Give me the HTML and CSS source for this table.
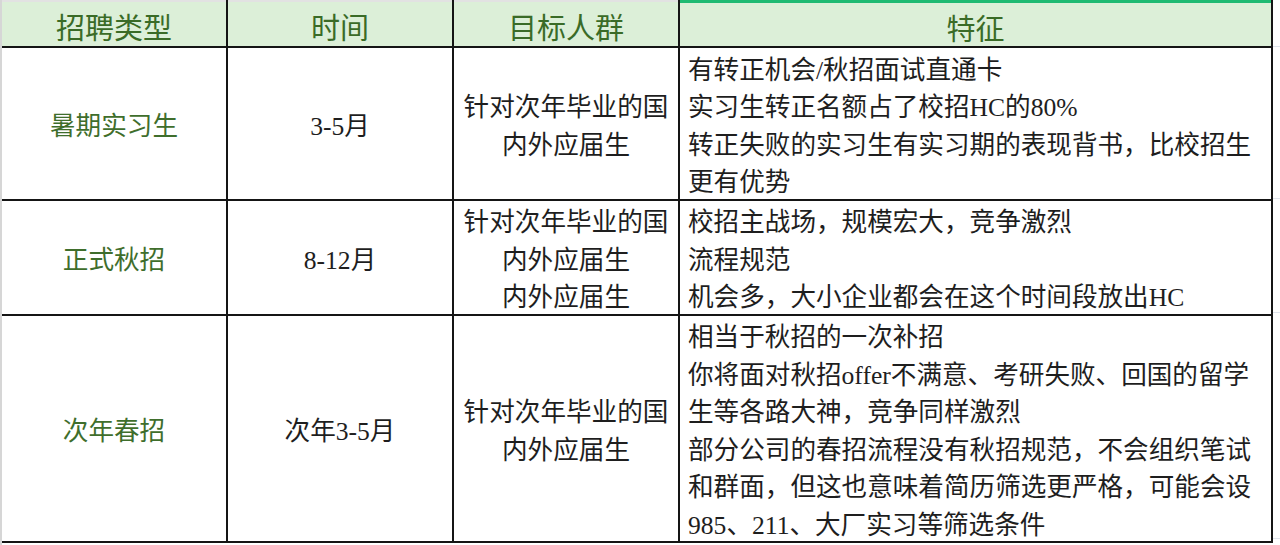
FILE: index.html
```html
<!DOCTYPE html>
<html lang="zh-CN">
<head>
<meta charset="utf-8">
<title>招聘类型</title>
<link rel="stylesheet" href="styles.css">
</head>
<body>
<div class="sheet">
  <div class="gutter"></div>
  <div class="table">
    <div class="hd">招聘类型</div>
    <div class="hd">时间</div>
    <div class="hd">目标人群</div>
    <div class="hd hd-active">特征</div>

    <div class="cell label">暑期实习生</div>
    <div class="cell mid"><span>3-5月</span></div>
    <div class="cell mid"><span>针对次年毕业的国内外应届生</span></div>
    <div class="cell feat">
      <p>有转正机会/秋招面试直通卡</p>
      <p>实习生转正名额占了校招HC的80%</p>
      <p>转正失败的实习生有实习期的表现背书，比校招生更有优势</p>
    </div>

    <div class="cell label">正式秋招</div>
    <div class="cell mid"><span>8-12月</span></div>
    <div class="cell mid"><span class="lines"><span>针对次年毕业的国</span><span>内外应届生</span><span>内外应届生</span></span></div>
    <div class="cell feat">
      <p>校招主战场，规模宏大，竞争激烈</p>
      <p>流程规范</p>
      <p>机会多，大小企业都会在这个时间段放出HC</p>
    </div>

    <div class="cell label">次年春招</div>
    <div class="cell mid"><span>次年3-5月</span></div>
    <div class="cell mid"><span>针对次年毕业的国内外应届生</span></div>
    <div class="cell feat">
      <p>相当于秋招的一次补招</p>
      <p>你将面对秋招offer不满意、考研失败、回国的留学生等各路大神，竞争同样激烈</p>
      <p>部分公司的春招流程没有秋招规范，不会组织笔试和群面，但这也意味着简历筛选更严格，可能会设985、211、大厂实习等筛选条件</p>
    </div>
  </div>
  <div class="edge">
    <div class="edge-cell"></div>
    <div class="edge-cell"></div>
    <div class="edge-cell"></div>
    <div class="edge-cell"></div>
  </div>
</div>
</body>
</html>
```

FILE: styles.css
```css
* {
  box-sizing: border-box;
}

html,
body {
  margin: 0;
  background: #ffffff;
}

body {
  font-family: "Liberation Serif", "Noto Sans CJK SC", serif;
  color: #1e1e1e;
}

.sheet {
  display: flex;
  align-items: flex-start;
  height: 545px;
  overflow: hidden;
}

.gutter {
  width: 2px;
  height: 545px;
  background: #d6d6d6;
}

.table {
  display: grid;
  grid-template-columns: 224px 224px 224px 591px;
  grid-template-rows: 46px 151px 113px 225px;
  gap: 2px;
  padding: 0 2px 2px 0;
  background: #151515;
}

.hd {
  display: flex;
  align-items: center;
  justify-content: center;
  padding-top: 4px;
  background: #dcefd8;
  border-top: 2px solid #e2e2e2;
  font-size: 29px;
  color: #3a6b27;
}

.hd-active {
  border-top: 3px solid #1fba72;
}

.cell {
  padding-top: 6px;
  background: #ffffff;
  font-size: 25.6px;
  line-height: 37.5px;
}

.label {
  display: flex;
  align-items: center;
  justify-content: center;
  color: #3f6e2c;
}

.mid {
  display: flex;
  align-items: center;
  justify-content: center;
  text-align: center;
}

.mid > span {
  display: block;
}

.lines > span {
  display: block;
}

.feat {
  display: flex;
  flex-direction: column;
  justify-content: center;
  padding-left: 8px;
  padding-right: 8px;
}

.feat p {
  margin: 0;
}

.edge {
  display: grid;
  grid-template-rows: 46px 151px 113px 225px;
  row-gap: 1px;
  width: 7px;
  background: #dfe4ec;
  padding-bottom: 1px;
}

.edge-cell {
  background: #ffffff;
}
```
